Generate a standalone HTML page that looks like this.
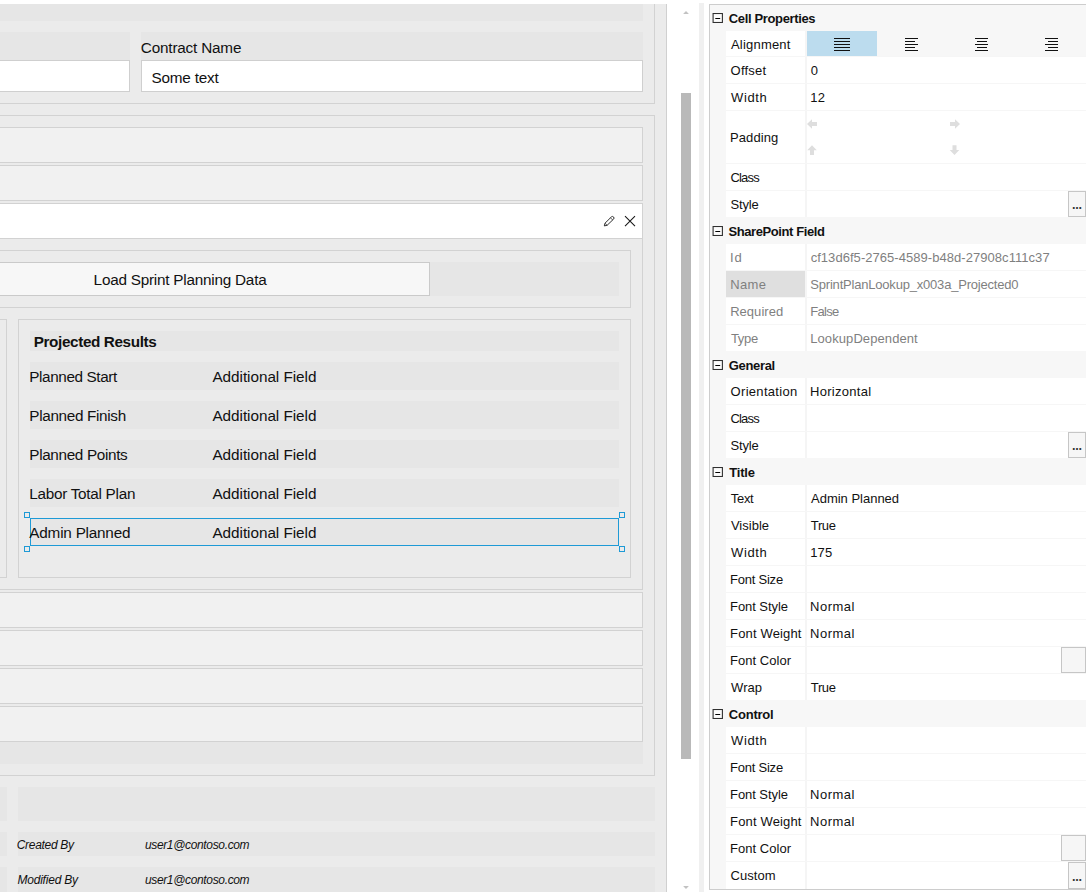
<!DOCTYPE html><html><head><meta charset="utf-8"><title>Form Designer</title><style>
html,body{margin:0;padding:0;background:#fff}
body{width:1086px;height:892px;overflow:hidden;position:relative;font-family:"Liberation Sans",sans-serif;color:#111}
div,svg,span{position:absolute;box-sizing:border-box}
span{white-space:pre;line-height:1}
.b{font-weight:bold}.i{font-style:italic}

</style></head><body>
<div style="left:0;top:4px;width:667px;height:888px;overflow:hidden;background:#ebebeb"><div style="position:absolute;left:0;top:-4px;width:667px;height:892px" id="lc">
<div style="left:666px;top:4px;width:1px;height:888px;background:#d0d0d0;"></div>
<div style="left:-5px;top:-5px;width:660px;height:109px;border:1px solid #d2d2d2;"></div>
<div style="left:0px;top:4px;width:643px;height:17px;background:#e6e6e6;"></div>
<div style="left:0px;top:32px;width:130px;height:28px;background:#e6e6e6;"></div>
<div style="left:141px;top:32px;width:502px;height:28px;background:#e6e6e6;"></div>
<div style="left:-5px;top:60px;width:135px;height:32px;background:#fff;border:1px solid #cfcfcf;"></div>
<div style="left:141px;top:60px;width:502px;height:32px;background:#fff;border:1px solid #cfcfcf;"></div>
<div style="left:-5px;top:115px;width:660px;height:661px;border:1px solid #d2d2d2;"></div>
<div style="left:-5px;top:127px;width:648px;height:36px;background:#f1f1f1;border:1px solid #d2d2d2;"></div>
<div style="left:-5px;top:165px;width:648px;height:36px;background:#f1f1f1;border:1px solid #d2d2d2;"></div>
<div style="left:-5px;top:203px;width:648px;height:387px;border:1px solid #d2d2d2;"></div>
<div style="left:-5px;top:203px;width:648px;height:36px;background:#fff;border:1px solid #d2d2d2;"></div>
<div style="left:-5px;top:250px;width:636px;height:58px;border:1px solid #d2d2d2;"></div>
<div style="left:0px;top:262px;width:619px;height:34px;background:#e6e6e6;"></div>
<div style="left:-5px;top:262px;width:435px;height:34px;background:#f7f7f7;border:1px solid #cacaca;"></div>
<div style="left:-5px;top:319px;width:12px;height:259px;border:1px solid #d2d2d2;"></div>
<div style="left:18px;top:319px;width:613px;height:259px;border:1px solid #d2d2d2;"></div>
<div style="left:30px;top:331px;width:589px;height:20px;background:#e6e6e6;"></div>
<div style="left:30px;top:362px;width:589px;height:28px;background:#e6e6e6;"></div>
<div style="left:30px;top:401px;width:589px;height:28px;background:#e6e6e6;"></div>
<div style="left:30px;top:440px;width:589px;height:28px;background:#e6e6e6;"></div>
<div style="left:30px;top:479px;width:589px;height:28px;background:#e6e6e6;"></div>
<div style="left:30px;top:518px;width:589px;height:28px;background:#e6e6e6;border:1px solid #1e9ad6;"></div>
<div style="left:24px;top:512px;width:6px;height:6px;border:1px solid #1e9ad6;"></div>
<div style="left:619px;top:512px;width:6px;height:6px;border:1px solid #1e9ad6;"></div>
<div style="left:24px;top:546px;width:6px;height:6px;border:1px solid #1e9ad6;"></div>
<div style="left:619px;top:546px;width:6px;height:6px;border:1px solid #1e9ad6;"></div>
<div style="left:-5px;top:592px;width:648px;height:36px;background:#f1f1f1;border:1px solid #d2d2d2;"></div>
<div style="left:-5px;top:630px;width:648px;height:36px;background:#f1f1f1;border:1px solid #d2d2d2;"></div>
<div style="left:-5px;top:668px;width:648px;height:36px;background:#f1f1f1;border:1px solid #d2d2d2;"></div>
<div style="left:-5px;top:706px;width:648px;height:36px;background:#f1f1f1;border:1px solid #d2d2d2;"></div>
<div style="left:0px;top:742px;width:643px;height:22px;background:#e6e6e6;"></div>
<div style="left:0px;top:787px;width:7px;height:34px;background:#e6e6e6;"></div>
<div style="left:18px;top:787px;width:637px;height:34px;background:#e6e6e6;"></div>
<div style="left:0px;top:832px;width:7px;height:24px;background:#e6e6e6;"></div>
<div style="left:18px;top:832px;width:637px;height:24px;background:#e6e6e6;"></div>
<div style="left:0px;top:867px;width:7px;height:25px;background:#e6e6e6;"></div>
<div style="left:18px;top:867px;width:637px;height:25px;background:#e6e6e6;"></div>
<svg style="left:602px;top:214px" width="36" height="14" viewBox="0 0 36 14">
<g fill="none" stroke="#1a1a1a" stroke-width="0.9">
<path d="M2.3 11.9 L3 9.2 L9.4 2.9 Q10.5 1.9 11.6 3 Q12.6 4.1 11.5 5.2 L5.1 11.3 Z"/>
<path d="M8.5 3.8 L10.7 6 M3 9.2 L5.1 11.3" stroke-width="0.7"/>
<path d="M23 2.2 L33 12.2 M33 2.2 L23 12.2" stroke-width="1.1"/>
</g></svg>
</div></div>
<div style="left:681px;top:93px;width:10px;height:666px;background:#b9b9b9;"></div>
<svg style="left:682px;top:10px" width="8" height="5" viewBox="0 0 8 5"><path d="M1.1 4 L4 1 L6.9 4 Z" fill="#c2c2c2"/></svg>
<svg style="left:682px;top:885px" width="8" height="5" viewBox="0 0 8 5"><path d="M1.1 1 L4 4 L6.9 1 Z" fill="#c2c2c2"/></svg>
<div style="left:699px;top:3px;width:5px;height:889px;background:#f0f0f0;"></div>
<div style="left:709px;top:4px;width:382px;height:886px;background:#f7f7f7;border:1px solid #cdcdcd;"></div>
<div style="left:726px;top:31px;width:79px;height:858px;background:#fff;"></div>
<div style="left:805px;top:31px;width:2px;height:858px;background:#f5f5f5;"></div>
<div style="left:807px;top:31px;width:279px;height:858px;background:#fff;"></div>
<svg style="left:712px;top:13px" width="12" height="10" viewBox="0 0 12 10"><rect x="1.1" y="0.5" width="9.3" height="9" fill="#fcfcfc" stroke="#303030" stroke-width="1.1"/><path d="M3.3 5.5 H8.2" stroke="#000" stroke-width="1"/></svg>
<div style="left:726px;top:56px;width:360px;height:1px;background:#f6f6f6;"></div>
<div style="left:807px;top:31px;width:279px;height:25px;background:#f7f7f7;"></div>
<div style="left:807px;top:31px;width:70px;height:25px;background:#bcdcee;"></div>
<div style="left:834px;top:38px;width:16px;height:1px;background:#111;"></div>
<div style="left:834px;top:41px;width:16px;height:1px;background:#111;"></div>
<div style="left:834px;top:44px;width:16px;height:1px;background:#111;"></div>
<div style="left:834px;top:47px;width:16px;height:1px;background:#111;"></div>
<div style="left:834px;top:50px;width:16px;height:1px;background:#111;"></div>
<div style="left:905px;top:38px;width:13px;height:1px;background:#111;"></div>
<div style="left:905px;top:41px;width:10px;height:1px;background:#111;"></div>
<div style="left:905px;top:44px;width:13px;height:1px;background:#111;"></div>
<div style="left:905px;top:47px;width:10px;height:1px;background:#111;"></div>
<div style="left:905px;top:50px;width:13px;height:1px;background:#111;"></div>
<div style="left:975.0px;top:38px;width:13px;height:1px;background:#111;"></div>
<div style="left:976.5px;top:41px;width:10px;height:1px;background:#111;"></div>
<div style="left:975.0px;top:44px;width:13px;height:1px;background:#111;"></div>
<div style="left:976.5px;top:47px;width:10px;height:1px;background:#111;"></div>
<div style="left:975.0px;top:50px;width:13px;height:1px;background:#111;"></div>
<div style="left:1045px;top:38px;width:13px;height:1px;background:#111;"></div>
<div style="left:1048px;top:41px;width:10px;height:1px;background:#111;"></div>
<div style="left:1045px;top:44px;width:13px;height:1px;background:#111;"></div>
<div style="left:1048px;top:47px;width:10px;height:1px;background:#111;"></div>
<div style="left:1045px;top:50px;width:13px;height:1px;background:#111;"></div>
<div style="left:726px;top:83px;width:360px;height:1px;background:#f6f6f6;"></div>
<div style="left:726px;top:110px;width:360px;height:1px;background:#f6f6f6;"></div>
<div style="left:726px;top:163px;width:360px;height:1px;background:#f6f6f6;"></div>
<svg style="left:806px;top:118px" width="160" height="40" viewBox="0 0 160 40"><g fill="#dedede">
<path d="M1 6 L6 1.2 V4 H11 V8 H6 V10.8 Z"/>
<path d="M154 6 L149 1.2 V4 H144 V8 H149 V10.8 Z"/>
<path d="M6 27.3 L10.8 32.3 H8 V37 H4 V32.3 H1.2 Z"/>
<path d="M148.5 37 L153.3 32 H150.5 V27.3 H146.5 V32 H143.7 Z"/>
</g></svg>
<div style="left:726px;top:190px;width:360px;height:1px;background:#f6f6f6;"></div>
<div style="left:726px;top:217px;width:360px;height:1px;background:#f6f6f6;"></div>
<div style="left:1068px;top:191px;width:18px;height:26px;background:#f6f6f6;border:1px solid #c6c6c6;"></div>
<div style="left:710px;top:217px;width:376px;height:27px;background:#f7f7f7;"></div>
<svg style="left:712px;top:226px" width="12" height="10" viewBox="0 0 12 10"><rect x="1.1" y="0.5" width="9.3" height="9" fill="#fcfcfc" stroke="#303030" stroke-width="1.1"/><path d="M3.3 5.5 H8.2" stroke="#000" stroke-width="1"/></svg>
<div style="left:726px;top:270px;width:360px;height:1px;background:#f6f6f6;"></div>
<div style="left:726px;top:297px;width:360px;height:1px;background:#f6f6f6;"></div>
<div style="left:726px;top:271px;width:79px;height:26px;background:#dfdfdf;"></div>
<div style="left:726px;top:324px;width:360px;height:1px;background:#f6f6f6;"></div>
<div style="left:726px;top:351px;width:360px;height:1px;background:#f6f6f6;"></div>
<div style="left:710px;top:351px;width:376px;height:27px;background:#f7f7f7;"></div>
<svg style="left:712px;top:360px" width="12" height="10" viewBox="0 0 12 10"><rect x="1.1" y="0.5" width="9.3" height="9" fill="#fcfcfc" stroke="#303030" stroke-width="1.1"/><path d="M3.3 5.5 H8.2" stroke="#000" stroke-width="1"/></svg>
<div style="left:726px;top:404px;width:360px;height:1px;background:#f6f6f6;"></div>
<div style="left:726px;top:431px;width:360px;height:1px;background:#f6f6f6;"></div>
<div style="left:726px;top:458px;width:360px;height:1px;background:#f6f6f6;"></div>
<div style="left:1068px;top:432px;width:18px;height:26px;background:#f6f6f6;border:1px solid #c6c6c6;"></div>
<div style="left:710px;top:458px;width:376px;height:27px;background:#f7f7f7;"></div>
<svg style="left:712px;top:467px" width="12" height="10" viewBox="0 0 12 10"><rect x="1.1" y="0.5" width="9.3" height="9" fill="#fcfcfc" stroke="#303030" stroke-width="1.1"/><path d="M3.3 5.5 H8.2" stroke="#000" stroke-width="1"/></svg>
<div style="left:726px;top:511px;width:360px;height:1px;background:#f6f6f6;"></div>
<div style="left:726px;top:538px;width:360px;height:1px;background:#f6f6f6;"></div>
<div style="left:726px;top:565px;width:360px;height:1px;background:#f6f6f6;"></div>
<div style="left:726px;top:592px;width:360px;height:1px;background:#f6f6f6;"></div>
<div style="left:726px;top:619px;width:360px;height:1px;background:#f6f6f6;"></div>
<div style="left:726px;top:646px;width:360px;height:1px;background:#f6f6f6;"></div>
<div style="left:726px;top:673px;width:360px;height:1px;background:#f6f6f6;"></div>
<div style="left:1061px;top:647px;width:25px;height:26px;background:#f6f6f6;border:1px solid #c6c6c6;"></div>
<div style="left:726px;top:700px;width:360px;height:1px;background:#f6f6f6;"></div>
<div style="left:710px;top:700px;width:376px;height:27px;background:#f7f7f7;"></div>
<svg style="left:712px;top:709px" width="12" height="10" viewBox="0 0 12 10"><rect x="1.1" y="0.5" width="9.3" height="9" fill="#fcfcfc" stroke="#303030" stroke-width="1.1"/><path d="M3.3 5.5 H8.2" stroke="#000" stroke-width="1"/></svg>
<div style="left:726px;top:753px;width:360px;height:1px;background:#f6f6f6;"></div>
<div style="left:726px;top:780px;width:360px;height:1px;background:#f6f6f6;"></div>
<div style="left:726px;top:807px;width:360px;height:1px;background:#f6f6f6;"></div>
<div style="left:726px;top:834px;width:360px;height:1px;background:#f6f6f6;"></div>
<div style="left:726px;top:861px;width:360px;height:1px;background:#f6f6f6;"></div>
<div style="left:1061px;top:835px;width:25px;height:26px;background:#f6f6f6;border:1px solid #c6c6c6;"></div>
<div style="left:726px;top:889px;width:360px;height:1px;background:#f6f6f6;"></div>
<div style="left:1068px;top:862px;width:18px;height:27px;background:#f6f6f6;border:1px solid #c6c6c6;"></div>
<div style="left:709px;top:889px;width:382px;height:1px;background:#cdcdcd;"></div>
<span style="left:140.85px;top:39.79px;font-size:15.3px;letter-spacing:-0.191px;">Contract Name</span>
<span style="left:151.50px;top:69.69px;font-size:15.3px;letter-spacing:-0.204px;">Some text</span>
<span style="left:93.61px;top:271.79px;font-size:15.3px;letter-spacing:-0.231px;">Load Sprint Planning Data</span>
<span class="b" style="left:33.74px;top:333.59px;font-size:15.3px;letter-spacing:-0.386px;">Projected Results</span>
<span style="left:29.27px;top:369.09px;font-size:15.3px;letter-spacing:-0.388px;">Planned Start</span>
<span style="left:212.43px;top:369.09px;font-size:15.3px;letter-spacing:-0.038px;">Additional Field</span>
<span style="left:29.27px;top:408.09px;font-size:15.3px;letter-spacing:-0.328px;">Planned Finish</span>
<span style="left:212.43px;top:408.09px;font-size:15.3px;letter-spacing:-0.038px;">Additional Field</span>
<span style="left:29.27px;top:447.09px;font-size:15.3px;letter-spacing:-0.339px;">Planned Points</span>
<span style="left:212.43px;top:447.09px;font-size:15.3px;letter-spacing:-0.038px;">Additional Field</span>
<span style="left:29.27px;top:486.09px;font-size:15.3px;letter-spacing:-0.277px;">Labor Total Plan</span>
<span style="left:212.43px;top:486.09px;font-size:15.3px;letter-spacing:-0.038px;">Additional Field</span>
<span style="left:29.35px;top:525.09px;font-size:15.3px;letter-spacing:-0.221px;">Admin Planned</span>
<span style="left:212.43px;top:525.09px;font-size:15.3px;letter-spacing:-0.038px;">Additional Field</span>
<span class="i" style="left:16.76px;top:839.03px;font-size:12px;letter-spacing:-0.307px;">Created By</span>
<span class="i" style="left:144.91px;top:839.03px;font-size:12px;letter-spacing:-0.345px;">user1@contoso.com</span>
<span class="i" style="left:17.43px;top:874.03px;font-size:12px;letter-spacing:-0.203px;">Modified By</span>
<span class="i" style="left:144.91px;top:874.03px;font-size:12px;letter-spacing:-0.345px;">user1@contoso.com</span>
<span class="b" style="left:728.77px;top:11.70px;font-size:13px;letter-spacing:-0.354px;">Cell Properties</span>
<span style="left:731.00px;top:37.70px;font-size:13px;color:#111;letter-spacing:0.196px;">Alignment</span>
<span style="left:730.59px;top:63.70px;font-size:13px;color:#111;letter-spacing:0.205px;">Offset</span>
<span style="left:810.65px;top:63.70px;font-size:13px;color:#111;">0</span>
<span style="left:731.11px;top:90.70px;font-size:13px;color:#111;letter-spacing:0.575px;">Width</span>
<span style="left:810.31px;top:90.70px;font-size:13px;color:#111;letter-spacing:0.296px;">12</span>
<span style="left:730.07px;top:130.70px;font-size:13px;color:#111;letter-spacing:0.072px;">Padding</span>
<span style="left:730.50px;top:170.70px;font-size:13px;color:#111;letter-spacing:-0.834px;">Class</span>
<span style="left:730.39px;top:197.70px;font-size:13px;color:#111;letter-spacing:-0.125px;">Style</span>
<span style="left:1071.13px;top:193.65px;font-size:18px;color:#333;letter-spacing:-1.678px;">...</span>
<span class="b" style="left:728.50px;top:224.70px;font-size:13px;letter-spacing:-0.416px;">SharePoint Field</span>
<span style="left:730.05px;top:250.70px;font-size:13px;color:#7f7f7f;letter-spacing:0.800px;">Id</span>
<span style="left:810.63px;top:250.70px;font-size:13px;color:#7f7f7f;letter-spacing:0.048px;">cf13d6f5-2765-4589-b48d-27908c111c37</span>
<span style="left:730.21px;top:277.70px;font-size:13px;color:#7f7f7f;letter-spacing:0.351px;">Name</span>
<span style="left:810.30px;top:277.70px;font-size:13px;color:#7f7f7f;letter-spacing:-0.200px;">SprintPlanLookup_x003a_Projected0</span>
<span style="left:730.19px;top:304.70px;font-size:13px;color:#7f7f7f;letter-spacing:0.029px;">Required</span>
<span style="left:810.19px;top:304.70px;font-size:13px;color:#7f7f7f;letter-spacing:-0.689px;">False</span>
<span style="left:730.98px;top:331.70px;font-size:13px;color:#7f7f7f;letter-spacing:-0.329px;">Type</span>
<span style="left:810.19px;top:331.70px;font-size:13px;color:#7f7f7f;letter-spacing:0.091px;">LookupDependent</span>
<span class="b" style="left:728.77px;top:358.70px;font-size:13px;letter-spacing:-0.325px;">General</span>
<span style="left:730.59px;top:384.70px;font-size:13px;color:#111;letter-spacing:0.306px;">Orientation</span>
<span style="left:810.07px;top:384.70px;font-size:13px;color:#111;letter-spacing:0.288px;">Horizontal</span>
<span style="left:730.50px;top:411.70px;font-size:13px;color:#111;letter-spacing:-0.834px;">Class</span>
<span style="left:730.39px;top:438.70px;font-size:13px;color:#111;letter-spacing:-0.125px;">Style</span>
<span style="left:1071.13px;top:434.65px;font-size:18px;color:#333;letter-spacing:-1.678px;">...</span>
<span class="b" style="left:729.25px;top:465.70px;font-size:13px;letter-spacing:-0.177px;">Title</span>
<span style="left:730.85px;top:491.70px;font-size:13px;color:#111;letter-spacing:-0.335px;">Text</span>
<span style="left:811.00px;top:491.70px;font-size:13px;color:#111;letter-spacing:-0.009px;">Admin Planned</span>
<span style="left:730.91px;top:518.70px;font-size:13px;color:#111;letter-spacing:0.018px;">Visible</span>
<span style="left:810.85px;top:518.70px;font-size:13px;color:#111;letter-spacing:-0.382px;">True</span>
<span style="left:731.11px;top:545.70px;font-size:13px;color:#111;letter-spacing:0.575px;">Width</span>
<span style="left:810.31px;top:545.70px;font-size:13px;color:#111;letter-spacing:0.090px;">175</span>
<span style="left:730.07px;top:572.70px;font-size:13px;color:#111;letter-spacing:-0.232px;">Font Size</span>
<span style="left:730.07px;top:599.70px;font-size:13px;color:#111;letter-spacing:-0.070px;">Font Style</span>
<span style="left:810.07px;top:599.70px;font-size:13px;color:#111;letter-spacing:0.491px;">Normal</span>
<span style="left:730.07px;top:626.70px;font-size:13px;color:#111;letter-spacing:0.151px;">Font Weight</span>
<span style="left:810.07px;top:626.70px;font-size:13px;color:#111;letter-spacing:0.491px;">Normal</span>
<span style="left:730.07px;top:653.70px;font-size:13px;color:#111;letter-spacing:0.025px;">Font Color</span>
<span style="left:731.11px;top:680.70px;font-size:13px;color:#111;letter-spacing:-0.003px;">Wrap</span>
<span style="left:810.85px;top:680.70px;font-size:13px;color:#111;letter-spacing:-0.382px;">True</span>
<span class="b" style="left:728.77px;top:707.70px;font-size:13px;letter-spacing:-0.211px;">Control</span>
<span style="left:731.11px;top:733.70px;font-size:13px;color:#111;letter-spacing:0.575px;">Width</span>
<span style="left:730.07px;top:760.70px;font-size:13px;color:#111;letter-spacing:-0.232px;">Font Size</span>
<span style="left:730.07px;top:787.70px;font-size:13px;color:#111;letter-spacing:-0.070px;">Font Style</span>
<span style="left:810.07px;top:787.70px;font-size:13px;color:#111;letter-spacing:0.491px;">Normal</span>
<span style="left:730.07px;top:814.70px;font-size:13px;color:#111;letter-spacing:0.151px;">Font Weight</span>
<span style="left:810.07px;top:814.70px;font-size:13px;color:#111;letter-spacing:0.491px;">Normal</span>
<span style="left:730.07px;top:841.70px;font-size:13px;color:#111;letter-spacing:0.025px;">Font Color</span>
<span style="left:730.50px;top:868.70px;font-size:13px;color:#111;letter-spacing:0.054px;">Custom</span>
<span style="left:1071.13px;top:865.65px;font-size:18px;color:#333;letter-spacing:-1.678px;">...</span>
</body></html>
